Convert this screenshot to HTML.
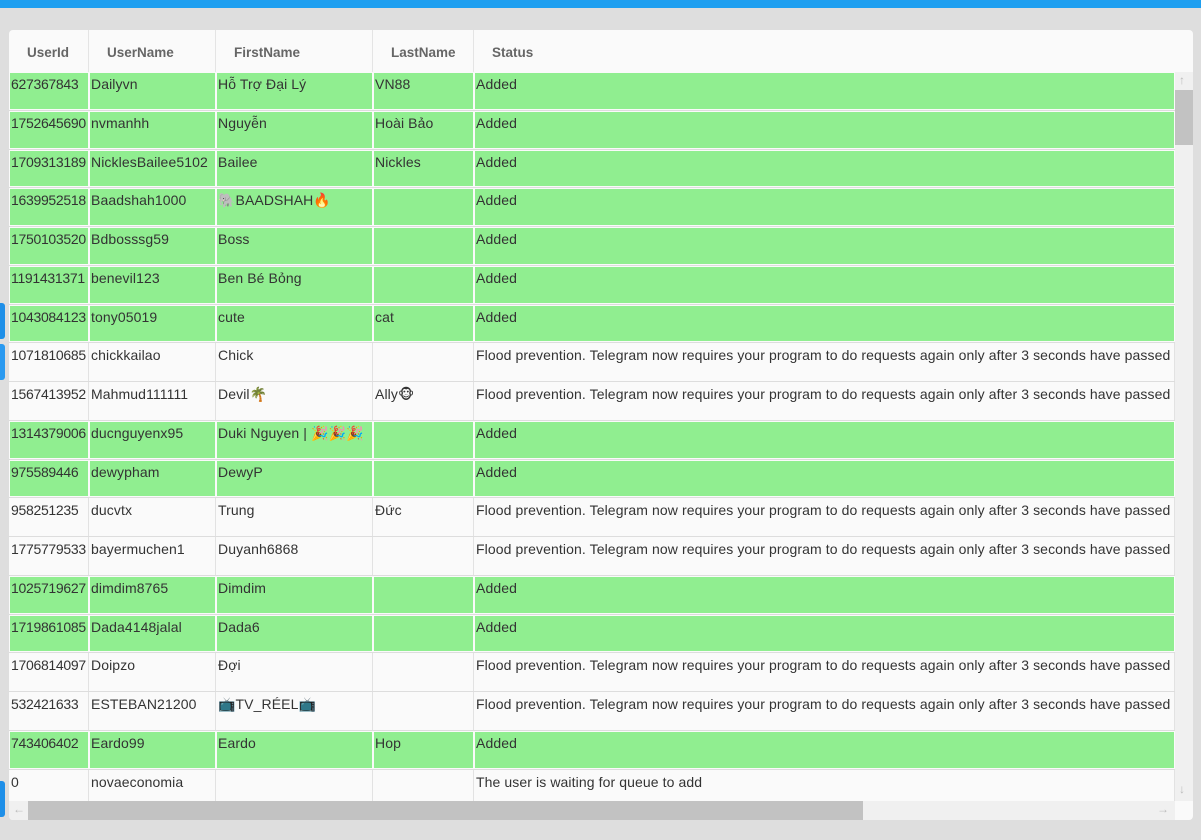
<!DOCTYPE html>
<html><head><meta charset="utf-8"><style>
*{box-sizing:border-box;margin:0;padding:0}
body{width:1201px;height:840px;background:#dedede;position:relative;overflow:hidden;font-family:"Liberation Sans","DejaVu Sans",sans-serif;font-size:14px;letter-spacing:0.1px;color:#333}
.top{position:absolute;left:0;top:0;width:1201px;height:8px;background:#1e9ff0}
.panel{position:absolute;left:9px;top:30px;width:1184px;height:790px;background:#fafafa;border-radius:4px;overflow:hidden}
.hdr{position:absolute;left:0;top:0;height:42px;display:flex}
.hdr div{height:42px;line-height:45px;font-weight:bold;color:#666;border-right:1px solid #e4e4e4;padding-left:18px;font-size:13.5px;letter-spacing:0}
.rows{position:absolute;left:0;top:42px;width:1166px}
.r{height:38.75px;display:flex;border-bottom:1px solid #ddd}
.c{border-right:1px solid #e2e2e2;position:relative;overflow:hidden;white-space:nowrap;padding:4px 0 0 2px}
.g .c{border-right:none;padding:0}
.g .c span{position:absolute;left:1px;right:1px;top:1px;bottom:1px;background:#90ee90;padding:3px 0 0 1px}
.w1{width:80px}.w2{width:127px}.w3{width:157px}.w4{width:101px}.w5{width:701px}
.w1{letter-spacing:-0.3px}
.vs{position:absolute;left:1166px;top:42px;width:18px;height:729px;background:#f0f0f0}
.vs .t{position:absolute;left:0;top:18px;width:18px;height:55px;background:#c2c2c2}
.hs{position:absolute;left:0;top:771px;width:1166px;height:19px;background:#f0f0f0}
.hs .t{position:absolute;left:19px;top:0;width:835px;height:19px;background:#c2c2c2}
.ar{position:absolute;color:#bbb;font-size:12px}
.lb{position:absolute;left:0;width:5px;background:#1e8fe8;border-radius:0 3px 3px 0}
</style></head><body>
<div class="top"></div>
<div class="lb" style="top:303px;height:36px"></div>
<div class="lb" style="top:344px;height:36px;background:#2a9af0"></div>
<div class="lb" style="top:781px;height:36px"></div>
<div class="panel">
<div class="hdr"><div class="w1">UserId</div><div class="w2">UserName</div><div class="w3">FirstName</div><div class="w4">LastName</div><div class="w5" style="border-right:none">Status</div></div>
<div class="rows">
<div class="r g"><div class="c w1"><span>627367843</span></div><div class="c w2"><span>Dailyvn</span></div><div class="c w3"><span>Hỗ Trợ Đại Lý</span></div><div class="c w4"><span>VN88</span></div><div class="c w5"><span>Added</span></div></div>
<div class="r g"><div class="c w1"><span>1752645690</span></div><div class="c w2"><span>nvmanhh</span></div><div class="c w3"><span>Nguyễn</span></div><div class="c w4"><span>Hoài Bảo</span></div><div class="c w5"><span>Added</span></div></div>
<div class="r g"><div class="c w1"><span>1709313189</span></div><div class="c w2"><span>NicklesBailee5102</span></div><div class="c w3"><span>Bailee</span></div><div class="c w4"><span>Nickles</span></div><div class="c w5"><span>Added</span></div></div>
<div class="r g"><div class="c w1"><span>1639952518</span></div><div class="c w2"><span>Baadshah1000</span></div><div class="c w3"><span>🐘BAADSHAH🔥</span></div><div class="c w4"><span></span></div><div class="c w5"><span>Added</span></div></div>
<div class="r g"><div class="c w1"><span>1750103520</span></div><div class="c w2"><span>Bdbosssg59</span></div><div class="c w3"><span>Boss</span></div><div class="c w4"><span></span></div><div class="c w5"><span>Added</span></div></div>
<div class="r g"><div class="c w1"><span>1191431371</span></div><div class="c w2"><span>benevil123</span></div><div class="c w3"><span>Ben Bé Bỏng</span></div><div class="c w4"><span></span></div><div class="c w5"><span>Added</span></div></div>
<div class="r g"><div class="c w1"><span>1043084123</span></div><div class="c w2"><span>tony05019</span></div><div class="c w3"><span>cute</span></div><div class="c w4"><span>cat</span></div><div class="c w5"><span>Added</span></div></div>
<div class="r"><div class="c w1">1071810685</div><div class="c w2">chickkailao</div><div class="c w3">Chick</div><div class="c w4"></div><div class="c w5">Flood prevention. Telegram now requires your program to do requests again only after 3 seconds have passed</div></div>
<div class="r"><div class="c w1">1567413952</div><div class="c w2">Mahmud111111</div><div class="c w3">Devil🌴</div><div class="c w4">Ally🐵</div><div class="c w5">Flood prevention. Telegram now requires your program to do requests again only after 3 seconds have passed</div></div>
<div class="r g"><div class="c w1"><span>1314379006</span></div><div class="c w2"><span>ducnguyenx95</span></div><div class="c w3"><span>Duki Nguyen | 🎉🎉🎉</span></div><div class="c w4"><span></span></div><div class="c w5"><span>Added</span></div></div>
<div class="r g"><div class="c w1"><span>975589446</span></div><div class="c w2"><span>dewypham</span></div><div class="c w3"><span>DewyP</span></div><div class="c w4"><span></span></div><div class="c w5"><span>Added</span></div></div>
<div class="r"><div class="c w1">958251235</div><div class="c w2">ducvtx</div><div class="c w3">Trung</div><div class="c w4">Đức</div><div class="c w5">Flood prevention. Telegram now requires your program to do requests again only after 3 seconds have passed</div></div>
<div class="r"><div class="c w1">1775779533</div><div class="c w2">bayermuchen1</div><div class="c w3">Duyanh6868</div><div class="c w4"></div><div class="c w5">Flood prevention. Telegram now requires your program to do requests again only after 3 seconds have passed</div></div>
<div class="r g"><div class="c w1"><span>1025719627</span></div><div class="c w2"><span>dimdim8765</span></div><div class="c w3"><span>Dimdim</span></div><div class="c w4"><span></span></div><div class="c w5"><span>Added</span></div></div>
<div class="r g"><div class="c w1"><span>1719861085</span></div><div class="c w2"><span>Dada4148jalal</span></div><div class="c w3"><span>Dada6</span></div><div class="c w4"><span></span></div><div class="c w5"><span>Added</span></div></div>
<div class="r"><div class="c w1">1706814097</div><div class="c w2">Doipzo</div><div class="c w3">Đợi</div><div class="c w4"></div><div class="c w5">Flood prevention. Telegram now requires your program to do requests again only after 3 seconds have passed</div></div>
<div class="r"><div class="c w1">532421633</div><div class="c w2">ESTEBAN21200</div><div class="c w3">📺TV_RÉEL📺</div><div class="c w4"></div><div class="c w5">Flood prevention. Telegram now requires your program to do requests again only after 3 seconds have passed</div></div>
<div class="r g"><div class="c w1"><span>743406402</span></div><div class="c w2"><span>Eardo99</span></div><div class="c w3"><span>Eardo</span></div><div class="c w4"><span>Hop</span></div><div class="c w5"><span>Added</span></div></div>
<div class="r"><div class="c w1">0</div><div class="c w2">novaeconomia</div><div class="c w3"></div><div class="c w4"></div><div class="c w5">The user is waiting for queue to add</div></div>
</div>
<div class="vs"><div class="t"></div><span class="ar" style="left:4px;top:1px">↑</span><span class="ar" style="left:4px;top:710px">↓</span></div>
<div class="hs"><span class="ar" style="left:4px;top:1px">←</span><div class="t"></div><span class="ar" style="left:1148px;top:1px">→</span></div>
</div>
</body></html>
